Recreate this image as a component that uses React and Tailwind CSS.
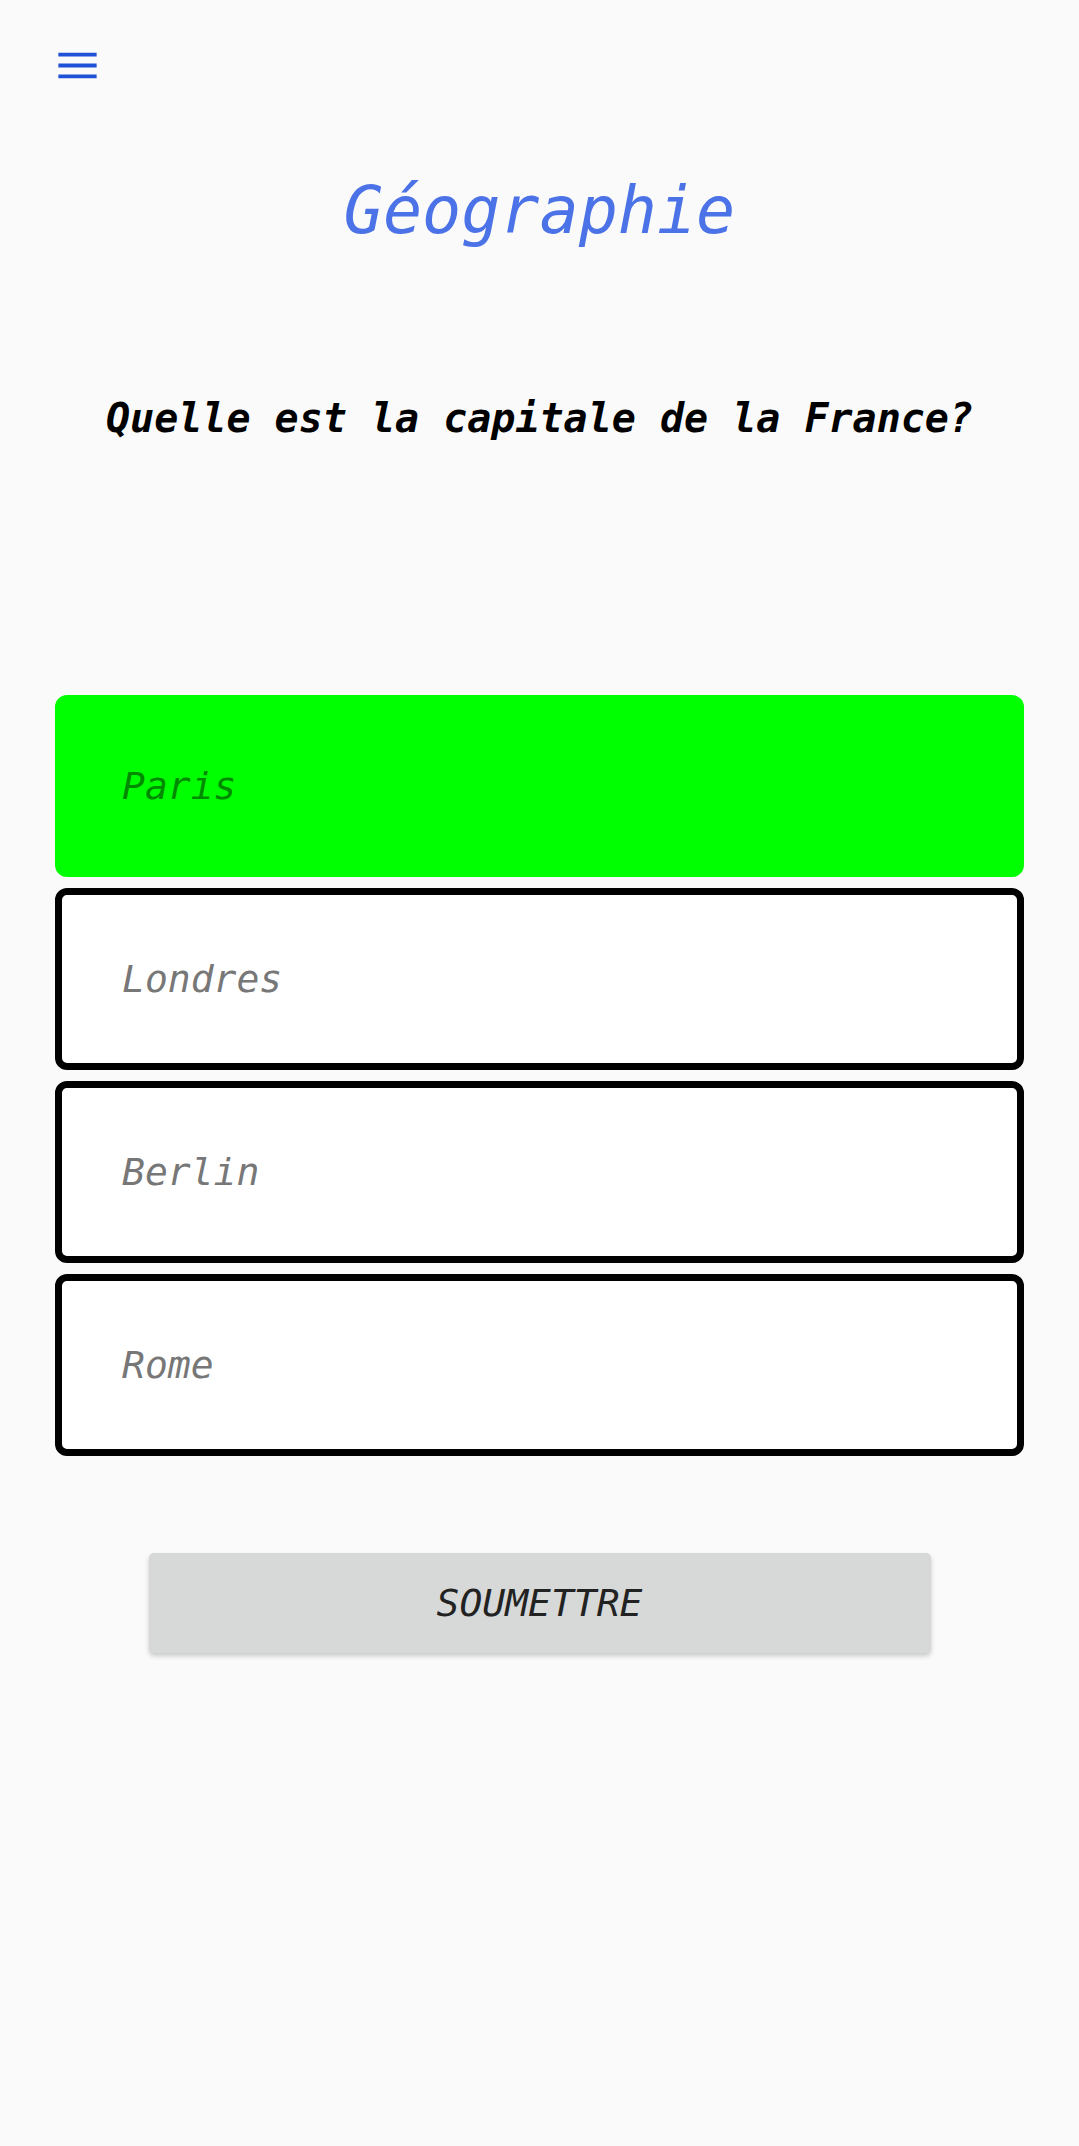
import React, { useState } from "react";

const answers = ["Paris", "Londres", "Berlin", "Rome"];

const MenuIcon = () => (
  <svg width="51" height="51" viewBox="0 0 24 24" fill="#1f51d6">
    <path d="M3 18h18v-1.8H3V18zm0-5.1h18v-1.8H3v1.8zM3 6v1.8h18V6H3z" />
  </svg>
);

const App = () => {
  const [selected, setSelected] = useState(0);

  return (
    <div className="min-h-screen bg-[#fafafa] font-['DejaVu_Sans_Mono',monospace]">
      {/* barre du haut */}
      <div className="pt-[40px] pl-[52px]">
        <button className="block">
          <MenuIcon />
        </button>
      </div>

      <h1 className="mt-[87px] text-center text-[65px] leading-none italic text-[#4b72e6]">
        Géographie
      </h1>

      <p className="mt-[155px] text-center text-[40px] leading-none font-bold italic text-black">
        Quelle est la capitale de la France?
      </p>

      <div className="mt-[257px] mx-[55px] flex flex-col gap-[11px]">
        {answers.map((answer, i) => (
          <button
            key={answer}
            onClick={() => setSelected(i)}
            className={
              selected === i
                ? "h-[182px] flex items-center rounded-[12px] border-[7px] border-[#00ff00] bg-[#00ff00] pl-[60px] text-left"
                : "h-[182px] flex items-center rounded-[12px] border-[7px] border-black bg-white pl-[60px] text-left"
            }
          >
            <span
              className={
                selected === i
                  ? "text-[38px] italic text-[#008a00]"
                  : "text-[38px] italic text-[#777777]"
              }
            >
              {answer}
            </span>
          </button>
        ))}
      </div>

      <div className="mt-[97px] flex justify-center">
        <button className="w-[782px] h-[100px] rounded-[5px] bg-[#d7d8d8] shadow-[0_3px_5px_rgba(0,0,0,0.2)] text-[38px] italic text-[#222222] uppercase">
          Soumettre
        </button>
      </div>
    </div>
  );
};

export default App;
